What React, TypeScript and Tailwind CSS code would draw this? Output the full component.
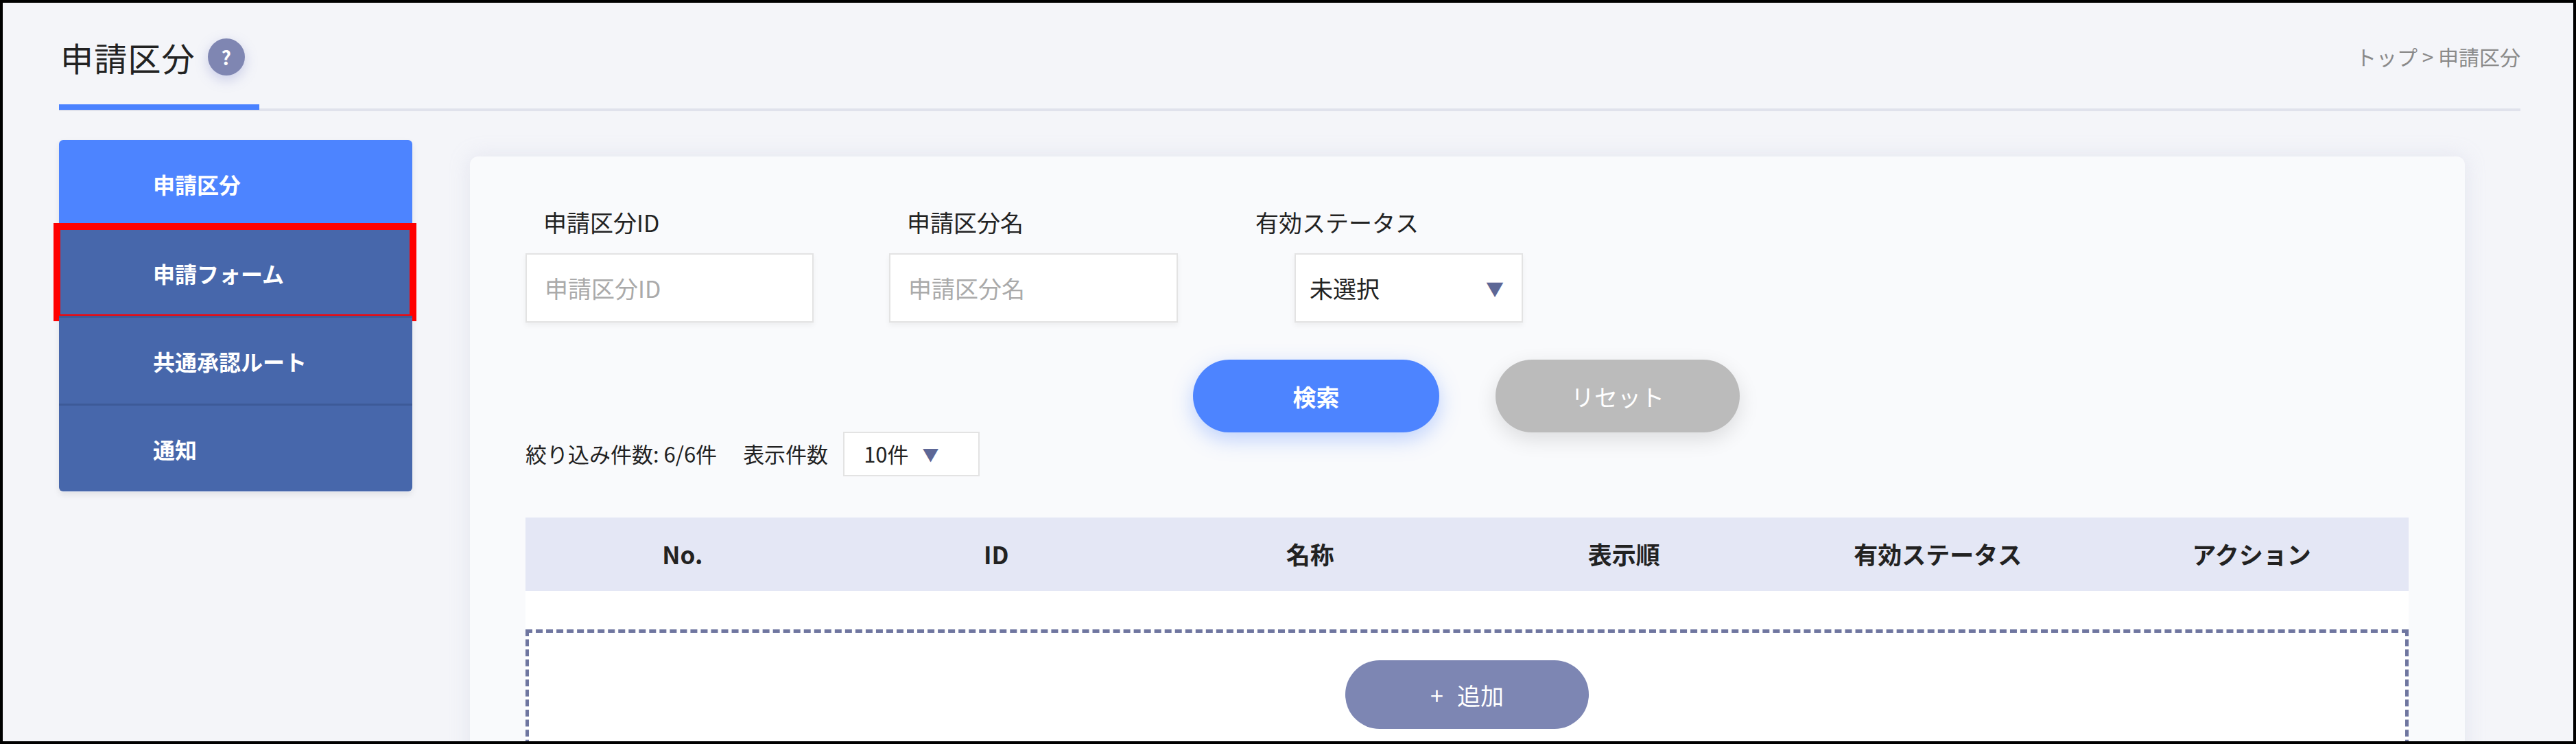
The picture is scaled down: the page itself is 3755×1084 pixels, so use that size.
const font = { fontFamily: '"Noto Sans CJK JP", "Liberation Sans", sans-serif' }

const navItems = ['申請区分', '申請フォーム', '共通承認ルート', '通知']
const columns = ['No.', 'ID', '名称', '表示順', '有効ステータス', 'アクション']

export default function App() {
  return (
    <div style={font} className="w-[3755px] h-[1084px] overflow-hidden border-[4px] border-black bg-[#f4f5f9] text-[#222]">
      {/* Header */}
      <div className="flex items-start justify-between pl-[82px] pr-[77px] pt-[44px]">
        <div className="flex flex-col">
          <div className="flex items-center gap-[18px] pl-[2px] h-[70px]">
            <span className="text-[48px] leading-none tracking-wide">申請区分</span>
            <span className="w-[54px] h-[54px] rounded-full bg-[#7f86b2] text-white text-[28px] font-bold flex items-center justify-center shadow-[0_6px_18px_rgba(120,130,200,0.35)]">?</span>
          </div>
        </div>
        <div className="text-[30px] text-[#8a8a8a] mt-[12px]">トップ &gt; 申請区分</div>
      </div>
      <div className="ml-[82px] mr-[77px] mt-[40px] relative h-[4px] bg-[#e0e2ec]">
        <div className="absolute left-0 -top-[6px] w-[292px] h-[8px] bg-[#4a82ff]" />
      </div>

      <div className="flex pl-[82px] pt-[42px] gap-[84px]">
        {/* Sidebar */}
        <div className="w-[515px] h-[513px] shrink-0 rounded-[6px] shadow-[0_4px_10px_rgba(0,0,0,0.08)]">
          {navItems.map((n, i) => (
            <div
              key={n}
              className={
                'relative h-[128px] flex items-center pl-[137px] text-white text-[32px] font-bold ' +
                (i === 0 ? 'bg-[#4d84ff] rounded-t-[6px]' : 'bg-[#4767ab] border-t-[3px] border-[#3d5a98]') +
                (i === 3 ? ' rounded-b-[6px]' : '')
              }
            >
              {n}
              {i === 1 && <div className="absolute -left-[8px] -right-[6px] -top-[10px] -bottom-[8px] border-[10px] border-[#ff0000]" />}
            </div>
          ))}
        </div>

        {/* Card */}
        <div className="w-[2908px] h-[900px] mt-[24px] bg-[#f9fafc] rounded-[12px] shadow-[0_0_30px_rgba(180,185,210,0.25)] pl-[81px] pr-[82px] pt-[70px]">
          <div className="flex gap-[110px]">
            <div>
              <div className="text-[34px] pl-[26px] mb-[20px]">申請区分ID</div>
              <div className="w-[420px] h-[101px] bg-white border-[2px] border-[#e3e3e3] shadow-[0_4px_8px_rgba(0,0,0,0.05)] flex items-center pl-[26px] text-[34px] text-[#aaa]">申請区分ID</div>
            </div>
            <div>
              <div className="text-[34px] pl-[26px] mb-[20px]">申請区分名</div>
              <div className="w-[421px] h-[101px] bg-white border-[2px] border-[#e3e3e3] shadow-[0_4px_8px_rgba(0,0,0,0.05)] flex items-center pl-[26px] text-[34px] text-[#aaa]">申請区分名</div>
            </div>
            <div>
              <div className="text-[34px] pl-[3px] mb-[20px]">有効ステータス</div>
              <div className="ml-[60px] w-[333px] h-[101px] bg-white border-[2px] border-[#e3e3e3] shadow-[0_4px_8px_rgba(0,0,0,0.05)] flex items-center justify-between pl-[20px] pr-[26px] text-[34px]">
                <span>未選択</span>
                <span className="text-[#5d6796] text-[26px]">▼</span>
              </div>
            </div>
          </div>

          <div className="flex gap-[82px] ml-[973px] mt-[54px]">
            <div className="w-[359px] h-[106px] rounded-full bg-[#4d84ff] text-white text-[34px] font-bold flex items-center justify-center shadow-[0_10px_30px_rgba(77,132,255,0.35)]">検索</div>
            <div className="w-[356px] h-[106px] rounded-full bg-[#bbbbbb] text-white text-[34px] flex items-center justify-center shadow-[0_10px_30px_rgba(0,0,0,0.12)]">リセット</div>
          </div>

          <div className="flex items-center -mt-[1px] text-[31px]">
            <span>絞り込み件数: 6/6件</span>
            <span className="ml-[38px]">表示件数</span>
            <div className="ml-[22px] w-[199px] h-[65px] bg-white border-[2px] border-[#e3e3e3] flex items-center pl-[28px] gap-[20px]">
              <span>10件</span>
              <span className="text-[#5d6796] text-[24px]">▼</span>
            </div>
          </div>

          <div className="mt-[60px] grid grid-cols-6 h-[107px] bg-[#e4e7f5] items-center text-center text-[35px] font-bold">
            {columns.map((c) => (
              <div key={c}>{c}</div>
            ))}
          </div>
          <div className="bg-white pt-[56px]">
            <div className="h-[200px] border-[5px] border-dashed border-[#6f76a0] flex justify-center pt-[40px]">
              <div className="w-[355px] h-[100px] rounded-full bg-[#7d86b3] text-white text-[34px] flex items-center justify-center gap-[20px]">
                <span>+</span>
                <span>追加</span>
              </div>
            </div>
          </div>
        </div>
      </div>
    </div>
  )
}
